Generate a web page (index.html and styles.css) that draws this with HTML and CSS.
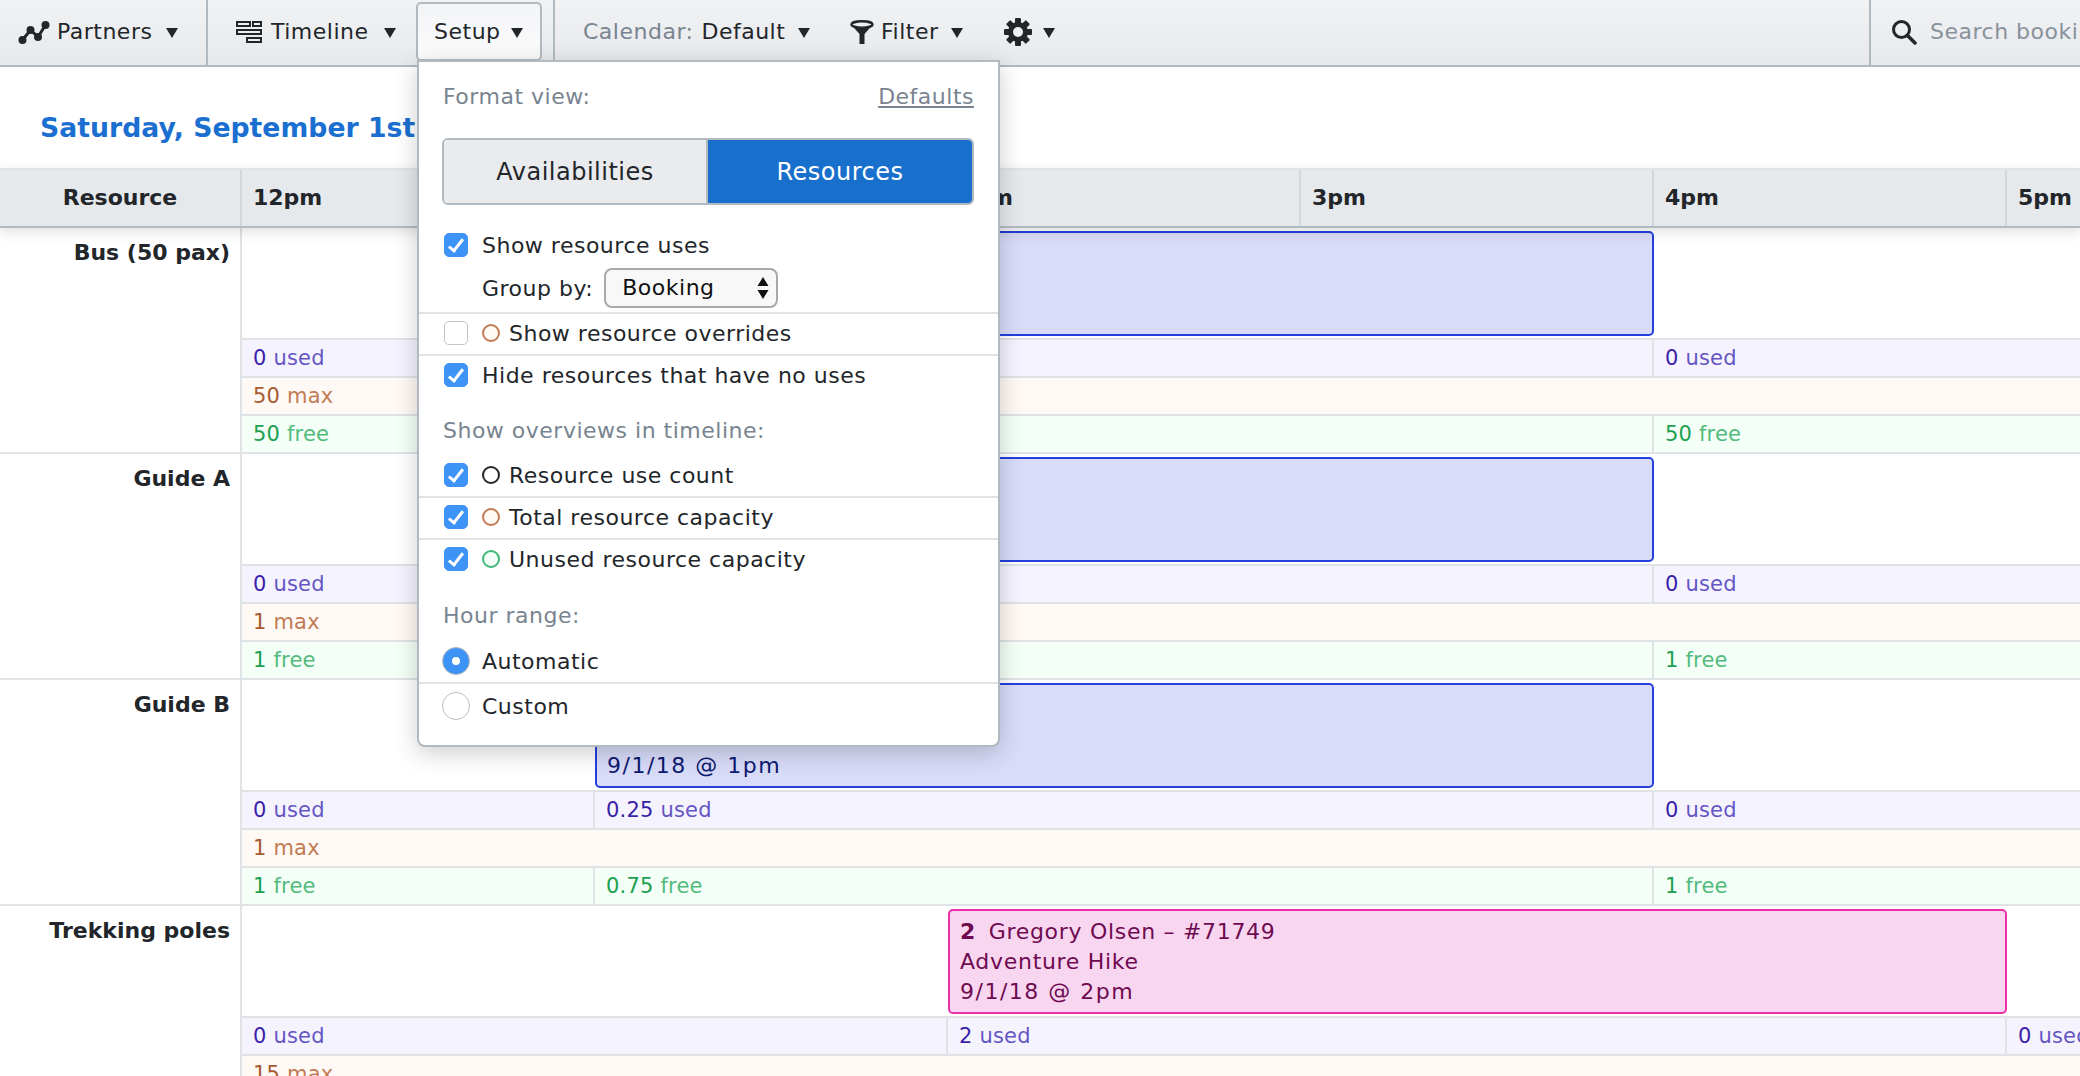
FILE: index.html
```html
<!DOCTYPE html>
<html lang="en">
<head>
    <meta charset="UTF-8">
    <meta name="viewport" content="width=device-width, initial-scale=1.0">
    <title>Timeline</title>
    <link rel="stylesheet" href="styles.css">
</head>
<body>
    <nav class="toolbar">
        <div class="tool tool-partners">
            <svg class="icon" width="32" height="26" viewBox="0 0 32 26"><path d="M4.5 21 L12.5 11 L20 18 L27.5 6" fill="none" stroke="#22262a" stroke-width="3"/><circle cx="4.5" cy="21" r="4" fill="#22262a"/><circle cx="12.5" cy="11" r="4" fill="#22262a"/><circle cx="20" cy="18" r="4" fill="#22262a"/><circle cx="27.5" cy="6" r="4" fill="#22262a"/></svg>
            <span>Partners</span><span class="caret"></span>
        </div>
        <div class="tool tool-timeline">
            <svg class="icon" width="26" height="22" viewBox="0 0 26 22" fill="none" stroke="#22262a" stroke-width="2"><path d="M1 1h13v4H1zM17 1h8v4h-8zM1 9h24v4H1zM11 17h14v4H11z"/></svg>
            <span>Timeline</span><span class="caret"></span>
        </div>
        <div class="tool tool-setup"><span>Setup</span><span class="caret"></span></div>
        <div class="tool tool-calendar"><span class="muted">Calendar:</span><span class="cal-value">Default</span><span class="caret"></span></div>
        <div class="tool tool-filter">
            <svg class="icon" width="24" height="24" viewBox="0 0 24 24"><path d="M1 4.5 L9.5 14 V24 H14.5 V14 L23 4.5 Z" fill="#22262a"/><ellipse cx="12" cy="4.5" rx="10.5" ry="3.2" fill="#eef0f2" stroke="#22262a" stroke-width="2.4"/></svg>
            <span>Filter</span><span class="caret"></span>
        </div>
        <div class="tool tool-gear">
            <svg class="icon" width="28" height="28" viewBox="0 0 28 28"><g fill="#22262a"><rect x="11" y="0" width="6" height="28" rx="1"/><rect x="11" y="0" width="6" height="28" rx="1" transform="rotate(45 14 14)"/><rect x="11" y="0" width="6" height="28" rx="1" transform="rotate(90 14 14)"/><rect x="11" y="0" width="6" height="28" rx="1" transform="rotate(135 14 14)"/><circle cx="14" cy="14" r="10"/></g><circle cx="14" cy="14" r="5" fill="#eef0f2"/></svg>
            <span class="caret"></span>
        </div>
        <div class="search">
            <svg class="icon" width="26" height="26" viewBox="0 0 26 26" fill="none" stroke="#22262a"><circle cx="10.5" cy="10.5" r="8" stroke-width="3"/><path d="M16.5 16.5 L24 24" stroke-width="3.5" stroke-linecap="round"/></svg>
            <span class="search-text">Search bookings</span>
        </div>
    </nav>

    <h1 class="date-title">Saturday, September 1st</h1>

    <div class="time-header">
        <div class="time-label">Resource</div>
        <div class="time-hours">
            <div class="hour">12pm</div>
            <div class="hour">1pm</div>
            <div class="hour">2pm</div>
            <div class="hour">3pm</div>
            <div class="hour">4pm</div>
            <div class="hour">5pm</div>
        </div>
    </div>

    <section class="group">
        <div class="group-name">Bus (50 pax)</div>
        <div class="lanes">
            <div class="lane-main"><div class="block block-blue from-1 span-3"></div></div>
            <div class="lane used">
                <div class="cell span-1"><b>0</b> used</div>
                <div class="cell span-3"></div>
                <div class="cell span-3"><b>0</b> used</div>
            </div>
            <div class="lane max"><div class="cell span-7"><b>50</b> max</div></div>
            <div class="lane free">
                <div class="cell span-1"><b>50</b> free</div>
                <div class="cell span-3"></div>
                <div class="cell span-3"><b>50</b> free</div>
            </div>
        </div>
    </section>

    <section class="group">
        <div class="group-name">Guide A</div>
        <div class="lanes">
            <div class="lane-main"><div class="block block-blue from-1 span-3"></div></div>
            <div class="lane used">
                <div class="cell span-1"><b>0</b> used</div>
                <div class="cell span-3"></div>
                <div class="cell span-3"><b>0</b> used</div>
            </div>
            <div class="lane max"><div class="cell span-7"><b>1</b> max</div></div>
            <div class="lane free">
                <div class="cell span-1"><b>1</b> free</div>
                <div class="cell span-3"></div>
                <div class="cell span-3"><b>1</b> free</div>
            </div>
        </div>
    </section>

    <section class="group">
        <div class="group-name">Guide B</div>
        <div class="lanes">
            <div class="lane-main">
                <div class="block block-blue from-1 span-3">
                    <div>&nbsp;</div>
                    <div>Long trekking</div>
                    <div class="block-when">9/1/18 @ 1pm</div>
                </div>
            </div>
            <div class="lane used">
                <div class="cell span-1"><b>0</b> used</div>
                <div class="cell span-3"><b>0.25</b> used</div>
                <div class="cell span-3"><b>0</b> used</div>
            </div>
            <div class="lane max"><div class="cell span-7"><b>1</b> max</div></div>
            <div class="lane free">
                <div class="cell span-1"><b>1</b> free</div>
                <div class="cell span-3"><b>0.75</b> free</div>
                <div class="cell span-3"><b>1</b> free</div>
            </div>
        </div>
    </section>

    <section class="group">
        <div class="group-name">Trekking poles</div>
        <div class="lanes">
            <div class="lane-main">
                <div class="block block-pink from-2 span-3">
                    <div><strong>2</strong> Gregory Olsen – #71749</div>
                    <div>Adventure Hike</div>
                    <div class="block-when">9/1/18 @ 2pm</div>
                </div>
            </div>
            <div class="lane used">
                <div class="cell span-2"><b>0</b> used</div>
                <div class="cell span-3"><b>2</b> used</div>
                <div class="cell span-2"><b>0</b> used</div>
            </div>
            <div class="lane max"><div class="cell span-7"><b>15</b> max</div></div>
        </div>
    </section>

    <div class="menu">
        <div class="menu-head">
            <span class="menu-label">Format view:</span>
            <a class="menu-link">Defaults</a>
        </div>
        <div class="segmented">
            <div class="seg">Availabilities</div>
            <div class="seg seg-on">Resources</div>
        </div>

        <label class="row row-first"><input type="checkbox" checked>Show resource uses</label>
        <div class="row row-group">
            <span>Group by:</span>
            <div class="select">Booking
                <svg class="select-arrows" width="12" height="22" viewBox="0 0 12 22"><path d="M6 0 L11.5 9 H0.5 Z M6 22 L11.5 13 H0.5 Z" fill="#111"/></svg>
            </div>
        </div>
        <label class="row row-rule"><input type="checkbox"><span class="dot dot-max"></span>Show resource overrides</label>
        <label class="row row-rule"><input type="checkbox" checked>Hide resources that have no uses</label>

        <div class="menu-label section-label">Show overviews in timeline:</div>
        <label class="row"><input type="checkbox" checked><span class="dot dot-used"></span>Resource use count</label>
        <label class="row row-rule"><input type="checkbox" checked><span class="dot dot-max"></span>Total resource capacity</label>
        <label class="row row-rule"><input type="checkbox" checked><span class="dot dot-free"></span>Unused resource capacity</label>

        <div class="menu-label section-label section-label-hours">Hour range:</div>
        <label class="row"><input type="radio" name="hours" checked>Automatic</label>
        <label class="row row-rule row-last"><input type="radio" name="hours">Custom</label>
    </div>
</body>
</html>
```

FILE: styles.css
```css
html, body { height: 100%; overflow: hidden; }
body { font-family: "DejaVu Sans", sans-serif; font-size: 22px; letter-spacing: 0.5px; color: #22262a; background: white; margin: 0; padding: 0; position: relative; }

.toolbar { display: flex; align-items: center; height: 67px; box-sizing: border-box; border-bottom: 2px solid #b1b9c1; background: linear-gradient(#f1f2f4, #e7e9ec); }
.tool { display: flex; align-items: center; white-space: nowrap; height: 100%; box-sizing: border-box; padding-bottom: 2px; }
.icon { flex: none; }
.caret { width: 0; height: 0; border-left: 6.5px solid transparent; border-right: 6.5px solid transparent; border-top: 10px solid #22262a; margin-left: 7px; margin-top: 3px; }
.muted { color: #78848f; }
.tool-partners { width: 208px; padding-left: 18px; border-right: 2px solid #b1b9c1; gap: 7px; }
.tool-timeline { width: 208px; padding-left: 28px; gap: 9px; }
.tool-timeline .caret { margin-left: 6px; }
.tool-setup { width: 126px; height: 59px; margin-top: 2px; align-self: flex-start; padding: 0 0 0 16px; background: linear-gradient(#f3f4f6, #fcfcfd); border: 2px solid #b1b9c1; border-radius: 5px; }
.tool-setup .caret { margin-left: 10px; }
.tool-calendar { margin-left: 11px; width: 285px; padding-left: 28px; border-left: 2px solid #b1b9c1; }
.tool-calendar .caret { margin-left: 13px; }
.cal-value { margin-left: 8px; }
.tool-filter { width: 154px; padding-left: 12px; gap: 7px; }
.tool-filter .caret { margin-left: 6px; }
.tool-gear { padding-left: 12px; }
.tool-gear .caret { margin-left: 11px; }
.search { display: flex; align-items: center; gap: 13px; margin-left: auto; width: 211px; height: 100%; padding-left: 20px; padding-bottom: 2px; box-sizing: border-box; border-left: 2px solid #b1b9c1; white-space: nowrap; overflow: hidden; }
.search-text { color: #87929c; }

.date-title { font-size: 26.7px; letter-spacing: 0; font-weight: bold; color: #1a6fd0; margin: 0; padding: 0 0 0 40px; height: 101px; line-height: 121px; white-space: nowrap; box-sizing: border-box; }

.time-header { display: flex; height: 60px; box-sizing: border-box; background: #e6e9ec; border-top: 2px solid #dfe3e6; border-bottom: 2px solid #b1b9c1; box-shadow: 0 4px 12px rgba(0, 0, 0, 0.13); position: relative; font-weight: bold; letter-spacing: 0; line-height: 56px; }
.time-label { flex: none; width: 242px; text-align: center; border-right: 2px solid #d3d8dc; box-sizing: border-box; }
.time-hours { display: grid; grid-template-columns: repeat(7, 353px); }
.hour { padding-left: 11px; border-right: 2px solid #d3d8dc; box-sizing: border-box; }

.group { display: flex; height: 226px; border-bottom: 2px solid #dfe3e6; box-sizing: border-box; }
.group-name { flex: none; width: 242px; box-sizing: border-box; padding: 10px 10px 0 0; text-align: right; font-weight: bold; letter-spacing: 0; line-height: 30px; border-right: 2px solid #dfe3e6; }
.lanes { flex: none; width: 2471px; }

.lane-main { display: grid; grid-template-columns: repeat(7, 353px); height: 112px; box-sizing: border-box; border-bottom: 2px solid #dfe3e6; padding-top: 3px; }
.block { border: 2px solid; border-radius: 5px; box-sizing: border-box; height: 105px; padding: 6px 10px; line-height: 30px; letter-spacing: 0.7px; white-space: nowrap; }
.block strong { margin-right: 5px; }
.block-when { letter-spacing: 1.5px; }
.block-blue { background: #d9dcf9; border-color: #243fdc; color: #0c1a70; }
.block-pink { background: #f9d6f0; border-color: #e930a8; color: #6e0a50; }
.from-1 { grid-column-start: 2; }
.from-2 { grid-column-start: 3; }

.lane { display: grid; grid-template-columns: repeat(7, 353px); height: 38px; box-sizing: border-box; border-bottom: 2px solid #dfe3e6; font-size: 21px; letter-spacing: 0.2px; line-height: 36px; }
.cell { padding-left: 11px; border-right: 2px solid #dfe3e6; box-sizing: border-box; white-space: nowrap; }
.span-1 { grid-column-end: span 1; }
.span-2 { grid-column-end: span 2; }
.span-3 { grid-column-end: span 3; }
.span-7 { grid-column-end: span 7; }
.cell b { font-weight: normal; }
.used { background: #f5f4fe; color: #6555c4; }
.used b { color: #3a1fa8; }
.max { background: #fef9f5; color: #c27c55; }
.max b { color: #a85a30; }
.free { background: #f4fff8; color: #52bb7c; }
.free b { color: #20a050; }

.menu { position: absolute; left: 417px; top: 60px; width: 583px; height: 687px; box-sizing: border-box; background: white; border: 2px solid #b1b9c1; border-radius: 0 0 8px 8px; box-shadow: 0 6px 24px rgba(0, 0, 0, 0.2); padding-top: 18px; }
.menu-head { display: flex; justify-content: space-between; padding: 0 24px; height: 34px; line-height: 34px; }
.menu-label { color: #78848f; }
.menu-link { color: #78848f; text-decoration: underline; }
.segmented { display: flex; margin: 24px 24px 0 23px; height: 67px; box-sizing: border-box; border: 2px solid #b1b9c1; border-radius: 6px; overflow: hidden; font-size: 24px; line-height: 65px; text-align: center; }
.seg { flex: none; width: 262px; background: #e9ebee; border-right: 2px solid #b1b9c1; }
.seg-on { flex: 1; background: #1870cc; color: white; border-right: 0; }

.row { display: flex; align-items: center; height: 42px; box-sizing: border-box; margin: 0; padding-left: 25px; white-space: nowrap; }
.row-first { margin-top: 19px; }
.row-group { height: 40px; margin-top: 2px; margin-bottom: 4px; padding-left: 63px; gap: 11px; }
.row-rule { border-top: 2px solid #dfe3e6; padding-bottom: 2px; }
.row-last { padding-top: 4px; padding-bottom: 0; }
.row input { appearance: none; flex: none; margin: 0 14px 0 0; width: 24px; height: 24px; box-sizing: border-box; border: 1px solid #c4c7ca; border-radius: 5px; background: white; position: relative; }
.row input:checked { background: #3d94f6; border-color: #3d94f6; }
.row input[type=checkbox]:checked::after { content: ""; position: absolute; left: 7px; top: 2px; width: 5px; height: 13px; border: solid white; border-width: 0 3px 3px 0; transform: rotate(38deg); }
.row input[type=radio] { width: 28px; height: 28px; border-color: #bcbcbc; border-radius: 50%; margin-left: -2px; margin-right: 12px; }
.row input[type=radio]:checked::after { content: ""; position: absolute; left: 9px; top: 9px; width: 8px; height: 8px; border-radius: 50%; background: white; }
.select { position: relative; flex: none; width: 174px; height: 40px; box-sizing: border-box; border: 2px solid #a9a9a9; border-radius: 8px; background: #f8f8f8; color: #111; line-height: 36px; padding-left: 16px; }
.select-arrows { position: absolute; right: 7px; top: 7px; }
.dot { flex: none; width: 18px; height: 18px; box-sizing: border-box; border: 2px solid; border-radius: 50%; margin-right: 9px; }
.dot-used { border-color: #22262a; }
.dot-max { border-color: #c27c55; background: #fef9f5; }
.dot-free { border-color: #3fb877; background: #f4fff8; }
.section-label { padding-left: 24px; height: 34px; line-height: 34px; margin-top: 18px; margin-bottom: 6px; }
.section-label-hours { margin-top: 19px; margin-bottom: 7px; }
```
